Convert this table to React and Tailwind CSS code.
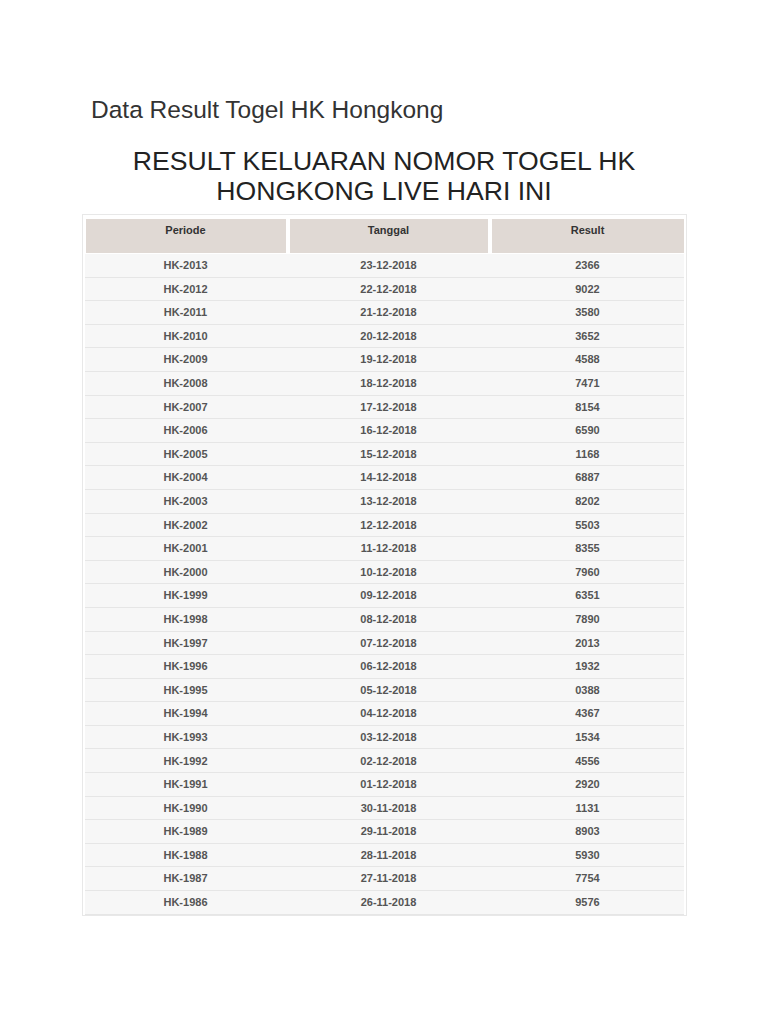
const rows = [
  ['HK-2013', '23-12-2018', '2366'],
  ['HK-2012', '22-12-2018', '9022'],
  ['HK-2011', '21-12-2018', '3580'],
  ['HK-2010', '20-12-2018', '3652'],
  ['HK-2009', '19-12-2018', '4588'],
  ['HK-2008', '18-12-2018', '7471'],
  ['HK-2007', '17-12-2018', '8154'],
  ['HK-2006', '16-12-2018', '6590'],
  ['HK-2005', '15-12-2018', '1168'],
  ['HK-2004', '14-12-2018', '6887'],
  ['HK-2003', '13-12-2018', '8202'],
  ['HK-2002', '12-12-2018', '5503'],
  ['HK-2001', '11-12-2018', '8355'],
  ['HK-2000', '10-12-2018', '7960'],
  ['HK-1999', '09-12-2018', '6351'],
  ['HK-1998', '08-12-2018', '7890'],
  ['HK-1997', '07-12-2018', '2013'],
  ['HK-1996', '06-12-2018', '1932'],
  ['HK-1995', '05-12-2018', '0388'],
  ['HK-1994', '04-12-2018', '4367'],
  ['HK-1993', '03-12-2018', '1534'],
  ['HK-1992', '02-12-2018', '4556'],
  ['HK-1991', '01-12-2018', '2920'],
  ['HK-1990', '30-11-2018', '1131'],
  ['HK-1989', '29-11-2018', '8903'],
  ['HK-1988', '28-11-2018', '5930'],
  ['HK-1987', '27-11-2018', '7754'],
  ['HK-1986', '26-11-2018', '9576'],
]

export default function App() {
  return (
    <div
      className="w-[768px] min-h-[1024px] bg-white"
      style={{ fontFamily: '"Liberation Sans", Arial, sans-serif' }}
    >
      {/* judul */}
      <div className="pt-[95px] pl-[91px] text-[24.5px] leading-[30px] text-[#333]">
        Data Result Togel HK Hongkong
      </div>

      <h1 className="mt-[21px] text-center text-[26.6px] leading-[30px] text-[#222]">
        RESULT KELUARAN NOMOR TOGEL HK
        <br />
        HONGKONG LIVE HARI INI
      </h1>

      {/* tabel */}
      <div className="mt-[8px] mx-auto w-[605px] border border-[#e8e8e8] pt-[4px] px-[2px]">
        <div className="grid grid-cols-[200px_198px_192px] gap-[4px] px-[1px] h-[34px] text-[11px] font-bold text-[#333]">
          <div className="bg-[#e0d9d4] text-center pt-[3px]">Periode</div>
          <div className="bg-[#e0d9d4] text-center pt-[3px]">Tanggal</div>
          <div className="bg-[#e0d9d4] text-center pt-[3px]">Result</div>
        </div>
        <div className="mt-[1px]">
          {rows.map((r, i) => (
            <div
              key={i}
              className="grid grid-cols-[200px_198px_192px] gap-[4px] px-[1px] h-[23.6px] items-center bg-[#f7f7f7] border-b border-[#e6e6e6] text-[11px] font-bold text-[#555]"
            >
              <div className="text-center">{r[0]}</div>
              <div className="text-center">{r[1]}</div>
              <div className="text-center">{r[2]}</div>
            </div>
          ))}
        </div>
      </div>
    </div>
  )
}
